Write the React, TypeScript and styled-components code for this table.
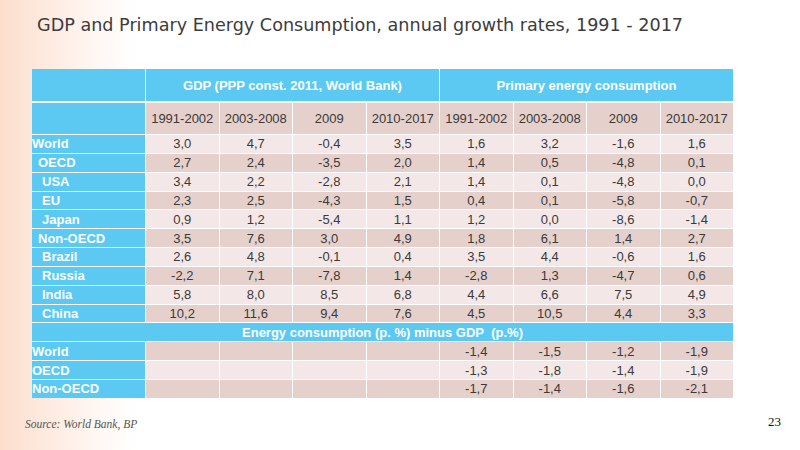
import styled, { createGlobalStyle } from "styled-components";

const GlobalStyle = createGlobalStyle`
  html, body {
    margin: 0;
    padding: 0;
    background: #fff;
  }
`;

type Row = { label: string; level: number; values: string[] };

const growth: Row[] = [
  { label: "World", level: 0, values: ["3,0", "4,7", "-0,4", "3,5", "1,6", "3,2", "-1,6", "1,6"] },
  { label: "OECD", level: 1, values: ["2,7", "2,4", "-3,5", "2,0", "1,4", "0,5", "-4,8", "0,1"] },
  { label: "USA", level: 2, values: ["3,4", "2,2", "-2,8", "2,1", "1,4", "0,1", "-4,8", "0,0"] },
  { label: "EU", level: 2, values: ["2,3", "2,5", "-4,3", "1,5", "0,4", "0,1", "-5,8", "-0,7"] },
  { label: "Japan", level: 2, values: ["0,9", "1,2", "-5,4", "1,1", "1,2", "0,0", "-8,6", "-1,4"] },
  { label: "Non-OECD", level: 1, values: ["3,5", "7,6", "3,0", "4,9", "1,8", "6,1", "1,4", "2,7"] },
  { label: "Brazil", level: 2, values: ["2,6", "4,8", "-0,1", "0,4", "3,5", "4,4", "-0,6", "1,6"] },
  { label: "Russia", level: 2, values: ["-2,2", "7,1", "-7,8", "1,4", "-2,8", "1,3", "-4,7", "0,6"] },
  { label: "India", level: 2, values: ["5,8", "8,0", "8,5", "6,8", "4,4", "6,6", "7,5", "4,9"] },
  { label: "China", level: 2, values: ["10,2", "11,6", "9,4", "7,6", "4,5", "10,5", "4,4", "3,3"] },
];

const gap: Row[] = [
  { label: "World", level: 0, values: ["", "", "", "", "-1,4", "-1,5", "-1,2", "-1,9"] },
  { label: "OECD", level: 0, values: ["", "", "", "", "-1,3", "-1,8", "-1,4", "-1,9"] },
  { label: "Non-OECD", level: 0, values: ["", "", "", "", "-1,7", "-1,4", "-1,6", "-2,1"] },
];

const periods = ["1991-2002", "2003-2008", "2009", "2010-2017"];

export default function App() {
  return (
    <Slide>
      <GlobalStyle />
      <Title>GDP and Primary Energy Consumption, annual growth rates, 1991 - 2017</Title>

      <Table>
        <GroupHead />
        <GroupHead $span={4}>GDP (PPP const. 2011, World Bank)</GroupHead>
        <GroupHead $span={4}>Primary energy consumption</GroupHead>

        <LabelCell />
        {[...periods, ...periods].map((p, i) => (
          <ValueCell key={i} $dark>{p}</ValueCell>
        ))}

        {growth.map((row, r) => (
          <TableRow key={row.label} row={row} dark={r % 2 === 1} />
        ))}

        <Banner>Energy consumption (p. %) minus GDP&nbsp; (p.%)</Banner>

        {gap.map((row, r) => (
          <TableRow key={"g" + row.label} row={row} dark={r % 2 === 0} />
        ))}
      </Table>

      <Footer>
        <Source>Source: World Bank, BP</Source>
        <PageNo>23</PageNo>
      </Footer>
    </Slide>
  );
}

function TableRow({ row, dark }: { row: Row; dark: boolean }) {
  return (
    <>
      <LabelCell $level={row.level}>{row.label}</LabelCell>
      {row.values.map((v, i) => (
        <ValueCell key={i} $dark={dark}>{v}</ValueCell>
      ))}
    </>
  );
}

const Slide = styled.div`
  width: 800px;
  height: 450px;
  box-sizing: border-box;
  display: flex;
  flex-direction: column;
  background: linear-gradient(to right, #fcdecd 0px, #fdebe1 50px, #fff8f4 100px, #ffffff 135px);
  overflow: hidden;
`;

const Title = styled.h1`
  margin: 13px 0 0 37px;
  font-family: "DejaVu Sans", sans-serif;
  font-weight: normal;
  font-size: 17.6px;
  line-height: 24px;
  color: #3c3c3c;
  white-space: nowrap;
`;

const Table = styled.div`
  margin: 32px 0 0 32px;
  width: 701px;
  display: grid;
  grid-template-columns: 113px repeat(8, 1fr);
  grid-template-rows: 33px 31px repeat(14, 17.85px);
  gap: 1px;
  background: #ffffff;
  font-family: "Liberation Sans", Arial, sans-serif;
  font-size: 13px;
`;

const GroupHead = styled.div<{ $span?: number }>`
  grid-column: span ${({ $span }) => $span ?? 1};
  margin-bottom: 1px;
  background: #5bc9f1;
  color: #ffffff;
  font-weight: bold;
  font-size: 13px;
  display: flex;
  align-items: center;
  justify-content: center;
`;

const LabelCell = styled.div<{ $level?: number }>`
  background: #5bc9f1;
  color: #ffffff;
  font-weight: bold;
  font-size: 13px;
  display: flex;
  align-items: center;
  padding-left: ${({ $level }) => ($level === 2 ? 10 : $level === 1 ? 6 : 0)}px;
  white-space: nowrap;
`;

const ValueCell = styled.div<{ $dark?: boolean }>`
  background: ${({ $dark }) => ($dark ? "#e6d0cc" : "#f3e8e7")};
  color: #3a3a3a;
  display: flex;
  align-items: center;
  justify-content: center;
  white-space: nowrap;
`;

const Banner = styled.div`
  grid-column: 1 / -1;
  background: #5bc9f1;
  color: #ffffff;
  font-weight: bold;
  font-size: 13px;
  display: flex;
  align-items: center;
  justify-content: center;
  white-space: nowrap;
`;

const Footer = styled.div`
  display: flex;
  justify-content: space-between;
  align-items: center;
  margin: 16px 19px 0 25px;
`;

const Source = styled.span`
  font-family: "Liberation Serif", "Times New Roman", serif;
  font-style: italic;
  font-size: 11.5px;
  color: #555555;
  padding-top: 4px;
`;

const PageNo = styled.span`
  font-family: "Liberation Serif", "Times New Roman", serif;
  font-size: 13px;
  color: #111111;
`;
